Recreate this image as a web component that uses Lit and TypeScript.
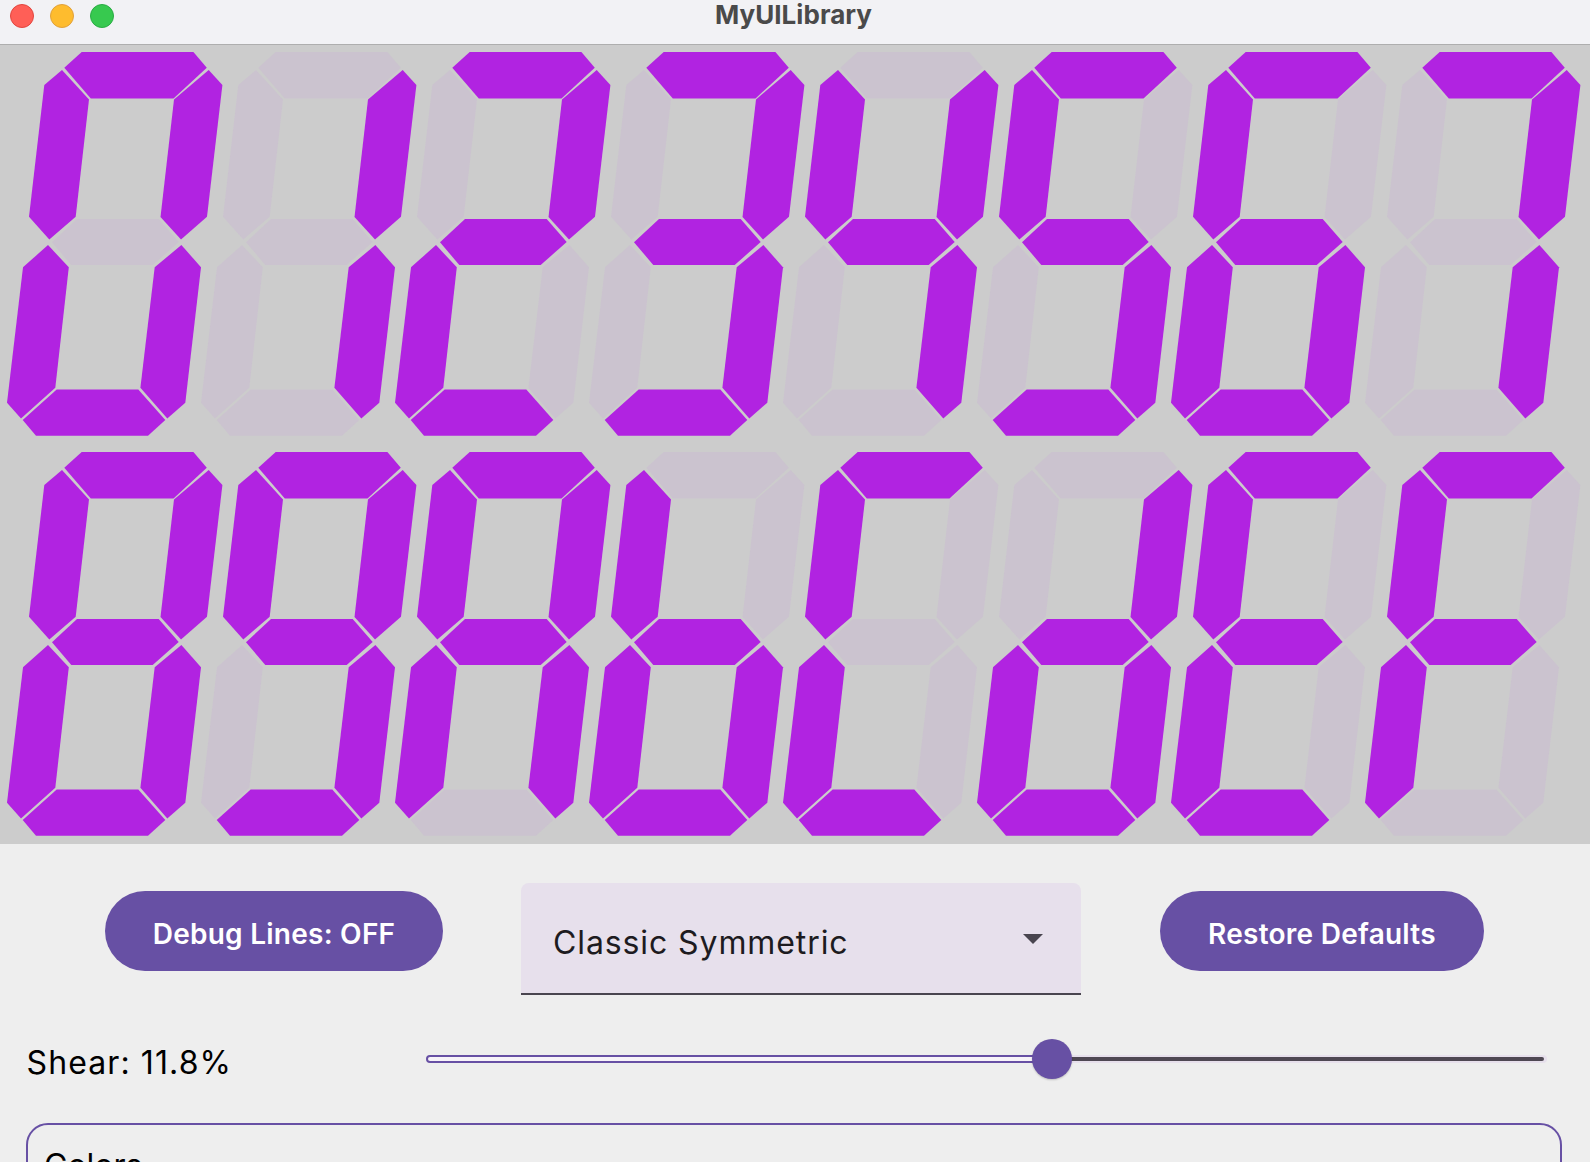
import { LitElement, html, css, svg } from "lit";
import { customElement } from "lit/decorators.js";

const SEGMENTS: number[][][] = [
  [[81.7,52],[193.4,52],[206.8,67.7],[173.5,98.4],[90.8,98.4],[64.3,67.7]],
  [[208.7,70],[222.4,85],[207,216.7],[181,239.4],[160.5,217],[174,99.4]],
  [[181.4,245],[201,267.3],[185.3,402.7],[167.3,418.4],[140.4,387.7],[154.7,267.3]],
  [[22.7,420],[56.7,389.4],[138.3,389.4],[165.3,420],[148,435.8],[36,435.8]],
  [[48,245],[68.8,267.3],[55.3,387.7],[21,418.4],[7,402.7],[23,267.3]],
  [[62,70],[89,99.4],[75.7,216.7],[49.3,239.4],[29,216.7],[44.3,85]],
  [[52,242.2],[77,219],[158.7,219],[178.7,242],[152.7,265],[71.3,265]],
];

const GLYPHS = [
  "abcdef", "bc", "abged", "abgcd", "fgbc", "afgcd", "afgedc", "abc",
  "abcdefg", "abcfgd", "abcefg", "fgedc", "afed", "bgedc", "afged", "afge",
];

const points = (poly: number[][], dx: number, dy: number) =>
  poly.map(([x, y]) => `${x + dx},${y + dy}`).join(" ");

@customElement("seven-segment-display")
class SevenSegmentDisplay extends LitElement {
  static styles = css`
    :host { display: block; background: #cccccc; height: 799px; }
    svg { display: block; width: 1590px; height: 799px; }
    .on { fill: #b123e1; }
    .off { fill: #cbc3cf; }
  `;
  render() {
    return html`<svg viewBox="0 45 1590 799">
      ${GLYPHS.map((glyph, i) =>
        SEGMENTS.map((poly, s) => svg`<polygon
          class=${glyph.includes("abcdefg"[s]) ? "on" : "off"}
          points=${points(poly, (i % 8) * 194, Math.floor(i / 8) * 400)}></polygon>`)
      )}
    </svg>`;
  }
}

@customElement("app-root")
class AppRoot extends LitElement {
  static styles = css`
    :host {
      display: block; height: 1162px; overflow: hidden; background: #eeeeee;
      font-family: Inter, Roboto, "Liberation Sans", sans-serif;
    }
    .titlebar {
      height: 44px; background: #f2f2f5; border-bottom: 1px solid #aeaeae;
      display: flex; align-items: center; padding-left: 10px; position: relative;
      gap: 16px;
    }
    .light { width: 24px; height: 24px; border-radius: 50%; box-sizing: border-box; margin-top: -12px; }
    .red { background: #ff5f57; border: 1px solid #e2463f; }
    .yellow { background: #febc2e; border: 1px solid #e1a13b; }
    .green { background: #37c94f; border: 1px solid #2aac44; }
    .title {
      position: absolute; left: -3px; right: 0; top: 0; text-align: center;
      font-size: 26px; font-weight: 700; line-height: 30px; color: #4a4a4a; letter-spacing: 0.05px;
    }
    .controls {
      display: flex; justify-content: space-between; align-items: flex-start;
      padding: 39px 106px 0 105px;
    }
    .btn {
      height: 80px; margin-top: 8px; border-radius: 40px; background: #6750a4; color: #fff;
      font-size: 28px; font-weight: 600; letter-spacing: 0.25px;
      display: flex; align-items: center; justify-content: center; padding-top: 6px; box-sizing: border-box;
    }
    .debug { width: 338px; }
    .restore { width: 324px; }
    .dropdown {
      width: 560px; height: 112px; box-sizing: border-box; background: #e7e0ec; margin-left: -1px;
      border-radius: 8px 8px 0 0; border-bottom: 2px solid #49454f;
      display: flex; align-items: center; justify-content: space-between;
      padding: 8px 38px 0 32px;
      font-size: 32px; letter-spacing: 0.9px; color: #1d1b20;
    }
    .caret {
      width: 0; height: 0; margin-top: -6px;
      border-left: 10px solid transparent; border-right: 10px solid transparent;
      border-top: 10px solid #49454f;
    }
    .shear {
      display: flex; align-items: center; padding: 43px 43px 0 26.5px; height: 87px; box-sizing: border-box;
    }
    .label { width: 399px; font-size: 32px; color: #000; padding-top: 4px; letter-spacing: 1.1px; }
    .slider { flex: 1; position: relative; height: 8px; display: flex; margin-top: -2px; }
    .active {
      width: 626px; box-sizing: border-box; background: #f7f3f9;
      border: 2px solid #6750a4; border-radius: 4px 0 0 4px;
    }
    .inactive {
      flex: 1; background: #e7e0ec; border-radius: 0 4px 4px 0; display: flex; align-items: center;
      padding-right: 3px;
    }
    .inactive-line { flex: 1; height: 4px; background: #4f4853; border-radius: 2px; }
    .thumb {
      position: absolute; left: 606px; top: -16px; width: 40px; height: 40px; border-radius: 50%;
      background: #6750a4; box-shadow: 0 1px 2px rgba(0,0,0,.2);
    }
    .card {
      margin: 41px 28px 0 26px; height: 200px; box-sizing: border-box;
      border: 2px solid #6750a4; border-radius: 22px; padding: 21px 16px;
      font-size: 32px; color: #000;
    }
  `;
  render() {
    return html`
      <div class="titlebar">
        <span class="light red"></span><span class="light yellow"></span><span class="light green"></span>
        <div class="title">MyUILibrary</div>
      </div>
      <seven-segment-display></seven-segment-display>
      <div class="controls">
        <div class="btn debug">Debug Lines: OFF</div>
        <div class="dropdown"><span>Classic Symmetric</span><span class="caret"></span></div>
        <div class="btn restore">Restore Defaults</div>
      </div>
      <div class="shear">
        <div class="label">Shear: 11.8%</div>
        <div class="slider">
          <div class="active"></div>
          <div class="inactive"><div class="inactive-line"></div></div>
          <div class="thumb"></div>
        </div>
      </div>
      <div class="card">Colors</div>
    `;
  }
}
